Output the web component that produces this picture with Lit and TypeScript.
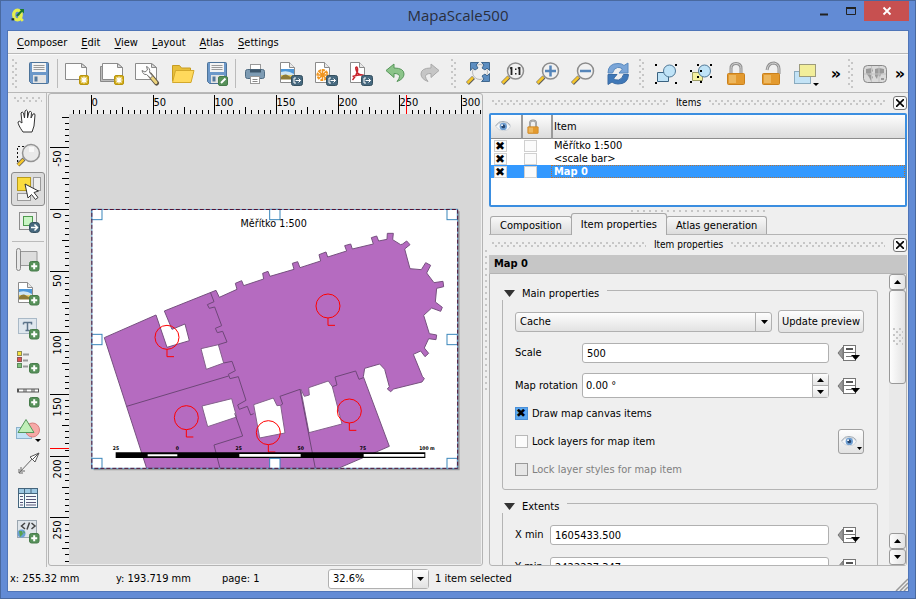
import { LitElement, html, svg, css } from "lit";
import { customElement, property } from "lit/decorators.js";
import { classMap } from "lit/directives/class-map.js";

/* ---------- shared icon fragments (26 x 26 grid) ---------- */
const plus = svg`<g transform="translate(14 14)"><rect x=".5" y=".5" width="9.5" height="9.5" rx="2" fill="#57915a" stroke="#467b4a"/><path d="M5.2 2.2v6M2.2 5.2h6" stroke="#fff" stroke-width="2"/></g>`;
const star = svg`<g transform="translate(15 14)"><rect x=".5" y=".5" width="9" height="9" rx="1.5" fill="#d3ad1a" stroke="#b8950e"/><path d="M5 1.5v7M1.5 5h7M2.5 2.5l5 5M7.500 2.500l-5 5" stroke="#fff" stroke-width="1.200"/></g>`;
const out = svg`<g transform="translate(14 14)"><rect x=".5" y=".5" width="11" height="10" rx="2" fill="#47697f" stroke="#35505f"/><path d="M5 3H3v5h2M4.500 5.500h5M7.500 3.500l2 2-2 2" fill="none" stroke="#fff"/></g>`;
const sheet = svg`<path d="M3.500 1.500h9l5 5v15h-14z" fill="#fff" stroke="#8b8b8b"/><path d="M12.500 1.500v5h5" fill="#e8e8e8" stroke="#8b8b8b"/>`;
const wideSheet = svg`<path d="M1.500 2.500h16l5 4v12h-21z" fill="#fdfdfd" stroke="#8b8b8b"/><path d="M17.500 2.500v4h5z" fill="#ddd" stroke="#8b8b8b"/>`;
const photo = svg`<rect x="4" y="8" width="13" height="10" fill="#4d97d8"/><path d="M4 13h13v5H4z" fill="#e9cf6d"/><path d="M4 11q7-2 13 2v1H4z" fill="#cfe6f5"/><path d="M4 16q4-4 7-1.500t6 1.500v2.500H4z" fill="#8d7a37"/>`;
const disk = svg`<path d="M3.500 2.500q0-1 1-1h17q1 0 1 1v19q0 1-1 1h-16l-2-2z" fill="#6c98c9" stroke="#4d7399"/><rect x="6" y="2" width="14" height="9" fill="#f4f4f4"/><path d="M7.500 4.500h11M7.500 6.500h11M7.500 8.500h11" stroke="#9a9a9a"/><rect x="7" y="14" width="13" height="8" fill="#e4e4e4"/><rect x="8.500" y="15.500" width="3" height="5" fill="#55799c"/>`;
const lens = svg`<path d="M9 16L2.500 22.500" stroke="#5b5b5b" stroke-width="4"/><path d="M8.500 16L2.500 22" stroke="#f5c62c" stroke-width="2.500"/><circle cx="15.500" cy="10" r="8" fill="#f1f1f1" stroke="#8c8c8c" stroke-width="1.500"/>`;
const shackle = svg`<path d="M8 13V7.500q0-5 5-5t5 5V13" fill="none" stroke="#8f8f8f" stroke-width="3"/><path d="M8 13V7.500q0-5 5-5t5 5V13" fill="none" stroke="#d5d5d5"/>`;
const lockBody = svg`<rect x="4.500" y="12.500" width="17" height="11" rx="1" fill="#e39a2f" stroke="#c9801c"/><path d="M6 14h7v8H6z" fill="#edb75e"/>`;
const drop = svg`<path d="M20 22h6l-3 3z" fill="#000"/>`;
const eye = svg`<path d="M1 12q4-6 12-6t12 6q-3 7-11 7-8 0-13-7z" fill="#f4f6f8" stroke="#b5bec7"/><path d="M1 11q5-8 12-7 8 0 12 6" fill="none" stroke="#9aa5b0" stroke-width="1.500"/><circle cx="13.500" cy="12" r="6" fill="#6f9fd2"/><circle cx="13.500" cy="12" r="3" fill="#27466f"/><circle cx="11.500" cy="10" r="1.500" fill="#fff"/>`;
const dots = (a: number, b: number, c: number, d: number) => svg`<path d="M${a} ${b}h2v2h-2zM${c} ${b}h2v2h-2zM${a} ${d}h2v2h-2zM${c} ${d}h2v2h-2z" fill="#000"/>`;

const icons: Record<string, unknown> = {
  save: disk,
  fresh: svg`${wideSheet}${star}`,
  duplicate: svg`<path d="M1.500 5.500h20v15h-20z" fill="#bbb" stroke="#888"/><path d="M3.500 2.500h15l5 4v12h-20z" fill="#fdfdfd" stroke="#8b8b8b"/><path d="M18.500 2.500v4h5z" fill="#ddd" stroke="#8b8b8b"/>${star}`,
  manager: svg`${wideSheet}<path d="M16 14l6.500 8" stroke="#5d5545" stroke-width="5" stroke-linecap="round"/><path d="M17.500 16l4.500 5.500" stroke="#ecd37c" stroke-width="3" stroke-linecap="round"/><path d="M12.500 5.500q4 1.500 3 6l3 3.500-2 2-4-3.500q-3.500.5-4.500-4l3 1.500 2.500-2z" fill="#fff" stroke="#777"/>`,
  open: svg`<path d="M3.500 20V4.500h7l2 2.500h9v3" fill="#e8bf3a" stroke="#c79c23"/><path d="M3.500 21.500l3-12h18.500l-3 12z" fill="#ffd95c" stroke="#d3a82b"/>`,
  saveAs: svg`${disk}<rect x="14.500" y="15.500" width="9" height="9" rx="1.500" fill="#57915a" stroke="#467b4a"/><path d="M17 22l4.500-4.500" stroke="#fff" stroke-width="2"/>`,
  print: svg`<rect x="8.500" y="3.500" width="10" height="7" fill="#fff" stroke="#999"/><rect x="3.500" y="8.500" width="19" height="9" rx="2" fill="#7d9bb3" stroke="#4f6c83"/><path d="M8 8.500h11v3H8z" fill="#3c566b"/><rect x="8.500" y="15.500" width="9" height="7" fill="#fff" stroke="#999"/><path d="M10.500 18.500h5M10.500 20.500h5" stroke="#888"/>`,
  exportImage: svg`${sheet}${photo}${out}`,
  exportSvg: svg`${sheet}<path d="M10.500 8v12M4.500 14h12M6.200 9.700l8.600 8.600M14.800 9.700l-8.600 8.600" stroke="#f0951e" stroke-width="1.500"/><circle cx="10.500" cy="14" r="5" fill="none" stroke="#f0951e" stroke-dasharray="2 1.900" stroke-width="2"/>${out}`,
  exportPdf: svg`${sheet}<path d="M9 6q2 0 1.500 4-1 5-5 9M9 6q-1 1 1.500 6 2 2.500 6 2-4-1-11 1.500" fill="none" stroke="#c8232b" stroke-width="1.500"/>${out}`,
  undo: svg`<path d="M4 9.500L12 3v4q10 0 10 6 0 5-7 7.500 2.500-3 2.500-5 0-3-5.500-3v4z" fill="#8cc48a" stroke="#56965a" stroke-linejoin="round"/>`,
  redo: svg`<path d="M22 9.500L14 3v4Q4 7 4 13q0 5 7 7.500-2.500-3-2.500-5 0-3 5.500-3v4z" fill="#c6c6c6" stroke="#a9a9a9" stroke-linejoin="round"/>`,
  zoomFull: svg`<path d="M8.500 16.500L2.500 22.500" stroke="#5b5b5b" stroke-width="4"/><path d="M8 16.500L2.500 22" stroke="#f5c62c" stroke-width="2.500"/><circle cx="15" cy="11" r="7.500" fill="#efefef" stroke="#bbb"/><path d="M5.500 1.500h8l-2.500 2.500 2 3-3 2-2.500-2-2 2.500zM24.500 1.500h-8l2.500 2.500-2 3 3 2 2-2 2.500 2.500zM24.500 20.500h-8l2.500-2.500-2-3 3-2 2 2 2.500-2.500z" fill="#5d8ec1" stroke="#40688f"/>`,
  zoomActual: svg`${lens}<path d="M11.500 6v8M19.500 6v8M10 7.500l1.500-1M18 7.500l1.500-1" stroke="#222" stroke-width="1.800"/><path d="M15 7.500h1.500v1.500H15zM15 12h1.500v1.500H15z" fill="#222"/>`,
  zoomIn: svg`${lens}<path d="M15.500 4.500v11M10 10h11" stroke="#5585b9" stroke-width="2.500"/>`,
  zoomOut: svg`${lens}<path d="M10 10h11" stroke="#5585b9" stroke-width="2.500"/>`,
  refresh: svg`<path d="M3 12Q3 2.500 13 2.500q4 0 6 2L23 2v10h-9l3.500-4Q15 6 12.500 6.500 9 7 7.500 12z" fill="#7ba6d8" stroke="#5a8abf"/><path d="M23.500 13.500Q23 23 13 23q-4 0-6-2l-4 2.500v-10h9L8.500 17.500q2 2 5 1.500 4-1 5-5.500z" fill="#3f78b8" stroke="#3a6ba3"/>`,
  selectAll: svg`<path d="M4.500 11.500h11v9h-11z" fill="#bfe3f7" stroke="#3a6280"/><circle cx="16.500" cy="10" r="6" fill="#bfe3f7" stroke="#4f7795"/>${dots(2, 3, 22, 21)}`,
  deselect: svg`<path d="M4.500 11.500h10v8h-10z" fill="#f5f1a0" stroke="#9a9a62"/><circle cx="16.500" cy="10" r="6" fill="#bfe3f7" stroke="#4f7795"/>${dots(9, 3, 22, 15)}${dots(2, 9, 12, 20)}`,
  lock: svg`${shackle}${lockBody}`,
  unlock: svg`<path d="M9 9q1-7 7-7 5 1 5 6v5" fill="none" stroke="#8f8f8f" stroke-width="3"/><path d="M9 9q1-7 7-7 5 1 5 6v5" fill="none" stroke="#d5d5d5"/>${lockBody}`,
  raise: svg`<rect x="1.500" y="10.500" width="16" height="12" fill="#c3e3f6" stroke="#8aabbf"/><rect x="6.500" y="3.500" width="16" height="12" fill="#f2ee9a" stroke="#9d9b7b"/>${drop}`,
  atlas: svg`<rect x="1.500" y="4.500" width="23" height="17" rx="4" fill="#dadada" stroke="#888"/><path d="M4 8l6-1 1 3-3 3 3 3-2 4-2-4-3-4zM13 8l4-1 5 1v4l-3 1-1 3-2-2-1 4-2-3 0-4zM19 17h3v2h-3z" fill="#9a9a9a"/><path d="M9.500 5v16M17 5v16M2 13h22" stroke="#c2c2c2"/>`,
  pan: svg`<path d="M8 24q-5-7-5-10 1-2 4 1L6 5q1-2 2.500 0l1 5L10 3q1.500-2 2.500 0v7l1.500-6q2-1.500 2.500.5L16 10l2-4q2-1 2 1l-1 11-2 6z" fill="#fff" stroke="#333" stroke-linejoin="round"/>`,
  zoom: svg`<path d="M2.500 20V4.500h12M2.500 14v5h6" fill="none" stroke="#111" stroke-dasharray="2 2"/><path d="M9 17l-6 6" stroke="#5b5b5b" stroke-width="4"/><path d="M8.500 17.500L3 23" stroke="#f5c62c" stroke-width="2.500"/><circle cx="16" cy="11" r="8.500" fill="#e9e9e9" stroke="#949494" stroke-width="1.500"/><path d="M14 5h5v5h-5zM16 12h6" fill="#f8f8f8"/>`,
  select: svg`<rect x="18.500" y="1.500" width="7" height="13" fill="#eee" stroke="#9a9a9a"/><rect x="2.500" y="17.500" width="13" height="7" fill="#eee" stroke="#9a9a9a"/><rect x="2.500" y="1.500" width="13" height="13" fill="#fbdc3f" stroke="#b89b1c"/><path d="M10 8l3 14 3.500-3.500 4 5 2.500-2-4-5 4.500-1.500z" fill="#fff" stroke="#333"/>`,
  moveContent: svg`<rect x="4.500" y="2.500" width="17" height="17" fill="#eee" stroke="#8d8d8d"/><rect x="8.500" y="6.500" width="9" height="9" fill="#c9f5c4" stroke="#4e9a4e"/><rect x="14.500" y="12.500" width="10" height="10" rx="3" fill="#47697f" stroke="#35505f"/><path d="M16 17.500h6M19.500 14.500l3 3-3 3" fill="none" stroke="#fff" stroke-width="1.500"/>`,
  addMap: svg`<path d="M5 4.500h17v14H6" fill="#ddd" stroke="#999"/><path d="M1.500 3.500q0-2 2-2t2 2v18q0 2-2 2t-2-2z" fill="#e8e8e8" stroke="#888"/>${plus}`,
  addImage: svg`${sheet}${photo}${plus}`,
  addLabel: svg`<rect x="3.500" y="3.500" width="18" height="15" fill="#dfe7ee" stroke="#a9b9c7"/><path d="M8.500 7.500h8v2M8.500 9.500v-2M12.500 7.500v8M10.500 15.500h4" fill="none" stroke="#5b738a" stroke-width="1.500"/>${plus}`,
  addLegend: svg`<path d="M8 5.500h6M8 11.500h5M8 17.500h5" stroke="#999" stroke-width="2"/><rect x="2.500" y="2.500" width="4" height="4" fill="#f6e23c" stroke="#8f8b55"/><rect x="2.500" y="8.500" width="4" height="4" fill="#e0504f" stroke="#8d5555"/><rect x="2.500" y="14.500" width="4" height="4" fill="#7fc17d" stroke="#5d8b5d"/>${plus}`,
  addScale: svg`<path d="M2 7.500h22" stroke="#555" stroke-width="4"/><path d="M4 7.500h4M12 7.500h4M20 7.500h3" stroke="#fff" stroke-width="2"/><path d="M8 7.500h4M16 7.500h4" stroke="#aaa" stroke-width="2"/>${plus}`,
  addShape: svg`<rect x="1.500" y="10.500" width="15" height="11" fill="#c3e3f6" stroke="#8bb2cc"/><circle cx="17.500" cy="13" r="7" fill="#f6a9a7" stroke="#d87c7c"/><path d="M11 2.500l8 13H3z" fill="#c0efb8" stroke="#55965a"/>${drop}`,
  addArrow: svg`<path d="M4 22L18 7M4 22v-4M4 22h4M6 20v-4M6 20h4" fill="none" stroke="#666"/><path d="M24 2l-4 9-5-5z" fill="#fff" stroke="#555"/><path d="M24 2l-7 7" stroke="#555"/>`,
  addTable: svg`<rect x="3.500" y="3.500" width="19" height="19" fill="#f4f9fc" stroke="#44657d"/><path d="M4 4h18v4H4z" fill="#9cc7e2"/><path d="M3.500 8.500h19M9.500 4v18M16 4v4" stroke="#44657d"/><path d="M5 11.500h3M5 14.500h3M5 17.500h3M5 20h3M11 11.500h10M11 14.500h10M11 17.500h10M11 20h10" stroke="#557"/>`,
  addHtml: svg`<rect x="2.500" y="1.500" width="19" height="17" fill="#dfe5ea" stroke="#9aa6b0"/><path d="M10 4L6.500 7l3.500 3M16.500 4L20 7l-3.500 3M14.500 3.500l-2.500 7" fill="none" stroke="#444" stroke-width="1.500"/><circle cx="6.500" cy="14.500" r="4" fill="#6aa0d8"/><path d="M4 12l3 0 1 3-3 3zM8 12l2 1-1 2z" fill="#5aa14f"/>${plus}`,
  eye,
  override: svg`<path d="M1 13l5-6v12z" fill="#999" stroke="#777"/><rect x="6.500" y="5.500" width="12" height="15" fill="#fff" stroke="#777"/><path d="M9 9h7" stroke="#555" stroke-width="2"/><path d="M7 12.500h11M9 16.500h6" stroke="#777"/><path d="M14 15h9l-4.500 5z" fill="#000"/>`,
  logo: svg`<ellipse cx="12" cy="13" rx="7" ry="9" fill="none" stroke="#e6ef4e" stroke-width="6"/><path d="M11 15L22 3" stroke="#1c7a2c" stroke-width="4"/><path d="M16 2h8v8z" fill="#1c7a2c"/><path d="M1 19h5v4H1z" fill="#23331c"/><path d="M14 15l8 9" stroke="#e6ef4e" stroke-width="5"/>`,
};

const icon = (name: string) => html`<svg viewBox="0 0 26 26" aria-hidden="true">${icons[name]}</svg>`;

const base = css`
  * { box-sizing: border-box; }
  button, input, select { font: inherit; color: inherit; margin: 0; }
  button { padding: 0; border: 0; background: none; display: flex; align-items: center; justify-content: center; }
  svg { display: block; }
  .dots {
    background-image:
      conic-gradient(at 2px 2px, transparent 270deg, #c6c6c6 0),
      conic-gradient(at 2px 2px, transparent 270deg, #c6c6c6 0);
    background-size: 6px 6px;
    background-position: 0 0, 3px 3px;
  }
`;

/* ---------- canvas with rulers ---------- */
const STEP = 37 / 6;
const ticks = (from: number, to: number) => Array.from({ length: to - from + 1 }, (_, i) => from + i);
const HANDLES = [[17, 13], [551, 13], [1083, 13], [17, 388], [1083, 388], [17, 760], [551, 760], [1083, 760]];
const MARKS = [[243, 397], [726, 303], [301, 638], [547, 683], [790, 618]];
const BAR: [number, string][] = [[90, "25"], [274, "0"], [458, "25"], [644, "50"], [831, "75"], [1023, "100 m"]];

@customElement("composer-canvas")
class ComposerCanvas extends LitElement {
  static styles = [base, css`
    :host { display: grid; grid-template: 19px minmax(0, 1fr) / 19px minmax(0, 1fr); min-width: 0; min-height: 0;
      border: 1px solid #b4b4b4; border-radius: 3px; padding: 1px; background: #efefef; margin-bottom: 1px; }
    svg { width: 100%; height: 100%; overflow: hidden; }
    .top { grid-column: 1 / 3; }
    .sheet { background: #d7d7d7; }
    text { font-family: "DejaVu Sans Condensed", "DejaVu Sans", sans-serif; font-size: 11px; }
    .tick { stroke: #000; }
    .cursor { stroke: #f00; }
    .room { fill: #b56bc0; stroke: #75507e; stroke-width: 3; }
    .hole { fill: #fff; stroke: #84608c; stroke-width: 3; }
    .wall { fill: none; stroke: #6d4677; stroke-width: 3; }
    .mark { fill: none; stroke: #f00; stroke-width: 3; }
    .handle { fill: #fff; stroke: #3a86bb; stroke-width: 3; }
    .small { font-size: 15px; font-weight: bold; text-anchor: middle; }
    .title { font-size: 32px; text-anchor: middle; }
  `];

  render() {
    return html`
      <svg class="top" role="img" aria-label="Horizontal ruler">
        ${ticks(-3, 63).map((n) => {
          const x = Math.round(41 + n * STEP) + 0.5;
          const y = n % 10 === 0 ? 0 : n % 5 === 0 ? 12 : 15;
          return svg`<path class="tick" d="M${x} ${y}V19"/>${n % 10 === 0 ? svg`<text x=${x} y="11">${n * 5}</text>` : ""}`;
        })}
        <path class="cursor" d="M356.500 0V19" />
      </svg>
      <svg role="img" aria-label="Vertical ruler">
        ${ticks(-15, 57).map((n) => {
          const y = Math.round(95 + n * STEP) + 0.5;
          const x = n % 10 === 0 ? 0 : n % 5 === 0 ? 12 : 15;
          return svg`<path class="tick" d="M${x} ${y}H19"/>${n % 10 === 0
            ? svg`<text transform="translate(11 ${y + 3}) rotate(-90)" text-anchor="end">${n * 5}</text>` : ""}`;
        })}
        <path class="cursor" d="M0 334.500H19" />
      </svg>
      <svg class="sheet" role="img" aria-label="Composition page">
        <g transform="translate(17 91) scale(.33333)">
          <path d="M23 19H1121V796H23z" fill="#9b9b9b" />
          <path d="M17 13H1115V790H17z" fill="#fff" />
          <path class="room" d="M55 398L210 330L243 427L310 407L297 357L258 373L235 318L390 256L400 277L453 253L448 235L467 227L473 242L533 222L530 205L546 199L552 214L624 193L619 175L635 170L642 188L704 168L699 149L720 141L725 156L782 138L776 122L794 117L799 132L862 117L856 98L872 93L878 108L903 103L904 85L922 85L920 104L944 119L950 117L962 108L972 119L956 132L972 191L1006 194L1019 173L1034 181L1022 204L1044 233L1071 229L1073 245L1052 250L1048 291L1069 307L1064 319L1037 309L1013 331L1030 386L1052 390L1050 404L1028 401L1015 429L1028 445L1017 455L1004 438L982 448L1009 514L1015 521L1008 531L923 552L914 560L904 552L910 545L896 493L881 477L836 490L832 515L910 724L757 790L182 790z" />
          <path class="hole" d="M345 431L397 419L413 474L361 493zM348 603L437 581L452 636L365 665zM503 599L562 579L573 602L584 601L597 684L521 699zM644 552L655 574L670 570L668 548L727 528L739 545L768 657L669 683z" />
          <path class="wall" d="M122 604L428 513M374 264L384 290L364 299L370 310L386 306L407 362L388 370L394 383L410 379L423 411L397 419M413 474L438 469L448 497L427 508L432 521L457 515L480 586L455 600L460 613L484 604L494 630L503 626M446 625L470 693L384 720L402 790M584 601L590 597L582 574L642 553L688 790M739 545L753 540L747 516L809 498L819 523L832 518" />
          ${MARKS.map(([x, y]) => svg`<circle class="mark" cx=${x} cy=${y} r="36"/><path class="mark" d="M${x} ${y + 36}v22h21"/>`)}
          <path d="M89 742H1018V759H89z" />
          <path d="M185 748H274V754H185zM460 747H644V755H460zM833 747H1015V755H833z" fill="#fff" />
          ${BAR.map(([x, label]) => svg`<text class="small" x=${x} y="735">${label}</text>`)}
          ${HANDLES.map(([x, y]) => svg`<rect class="handle" x=${x} y=${y} width="31" height="31"/>`)}
          <text class="title" x="563" y="66">Měřítko 1:500</text>
          <path d="M17.500 13.500H1115V790H17.500z" fill="none" stroke="#5fa3cf" stroke-width="3" />
          <path d="M17.500 13.500H1115V790H17.500z" fill="none" stroke="#54102f" stroke-width="3" stroke-dasharray="12 6" />
        </g>
      </svg>`;
  }
}

/* ---------- right hand panels ---------- */
@customElement("dock-title")
class DockTitle extends LitElement {
  @property() label = "";
  static styles = [base, css`
    :host { display: flex; align-items: center; gap: 8px; height: 20px; padding: 0 0 1px 3px; font-size: 10px; }
    .dots { flex: 1; height: 5px; }
    button { width: 14px; height: 14px; border: 1px solid #777; border-radius: 3px; background: #fafafa; }
    svg { width: 8px; height: 8px; }
  `];
  render() {
    return html`<span class="dots"></span><span>${this.label}</span><span class="dots"></span>
      <button aria-label="Close ${this.label}"><svg viewBox="0 0 8 8"><path d="M0 0l8 8M8 0L0 8" stroke="#000" stroke-width="1.600" /></svg></button>`;
  }
}

const ITEMS = [
  { name: "Měřítko 1:500", selected: false },
  { name: "<scale bar>", selected: false },
  { name: "Map 0", selected: true },
];

@customElement("items-panel")
class ItemsPanel extends LitElement {
  static styles = [base, css`
    :host { display: block; }
    .tree { height: 94px; border: 2px solid #3b8ee0; border-radius: 2px; background: #fff; }
    table { width: 100%; border-collapse: separate; border-spacing: 0; table-layout: fixed; }
    th { height: 24px; padding: 0 0 0 1px; text-align: left; font-weight: normal; border-bottom: 1px solid #8c8c8c;
      background: linear-gradient(#fdfdfd, #dcdcdc); }
    th:first-child { padding-left: 4px; }
    th + th { border-left: 2px solid #9a9a9a; }
    th svg { width: 16px; height: 16px; }
    th + th svg { margin-left: 1px; }
    .narrow { width: 30px; }
    td { height: 13px; padding: 0 0 0 3px; line-height: 13px; }
    .selected { background: #3399ff; color: #fff; font-weight: bold; }
    .selected td:last-child { outline: 1px dotted #b87333; outline-offset: -1px; }
    input { appearance: none; display: block; width: 13px; height: 12px; border: 1px solid #d0d0d0; background: #fbfbfb; color: #000; }
    input:checked::before { content: "✖"; display: block; font: 12px/10px "DejaVu Sans", sans-serif; }
  `];
  render() {
    return html`<div class="tree"><table>
      <colgroup><col class="narrow" /><col class="narrow" /><col /></colgroup>
      <thead><tr><th aria-label="Visible">${icon("eye")}</th><th aria-label="Locked">${icon("lock")}</th><th>Item</th></tr></thead>
      <tbody>${ITEMS.map((it) => html`<tr class=${classMap({ selected: it.selected })}>
        <td><input type="checkbox" checked aria-label="Show ${it.name}" /></td>
        <td><input type="checkbox" aria-label="Lock ${it.name}" /></td>
        <td>${it.name}</td></tr>`)}</tbody></table></div>`;
  }
}

const down = html`<svg class="arrow" viewBox="0 0 7 4"><path d="M0 0h7L3.500 4z" /></svg>`;
const up = html`<svg class="arrow" viewBox="0 0 7 4"><path d="M0 4h7L3.500 0z" /></svg>`;

@customElement("properties-panel")
class PropertiesPanel extends LitElement {
  static styles = [base, css`
    :host { display: flex; flex-direction: column; min-height: 0; flex: 1; }
    h2 { margin: 0; flex: none; height: 18px; padding: 0 5px; background: #c6c6c6; font-size: 11px; line-height: 18px; }
    .scroller { flex: 1; min-height: 0; display: flex; border: 1px solid #b4b4b4; border-radius: 0 0 3px 3px; margin-bottom: 1px; }
    .content { flex: 1; min-width: 0; overflow: hidden; padding: 7px 11px 0 12px; }
    fieldset { margin: 0 0 4px; padding: 10px 13px 12px 12px; border: 1px solid #b4b4b4; border-radius: 3px; min-width: 0; }
    .roomy { padding-top: 12px; }
    legend { display: flex; align-items: center; gap: 7px; margin-left: -13px; padding: 6px 8px 0 2px; line-height: 13px; background: #efefef; }
    .tri { width: 11px; height: 7px; }
    .arrow { width: 7px; height: 4px; }
    .row { display: flex; align-items: center; margin-bottom: 10px; }
    .field { flex: 1; min-width: 0; height: 20px; border: 1px solid #b0b0b0; border-radius: 3px; background: #fff; padding: 0 4px; outline: 0; }
    .spin { flex: 1; min-width: 0; height: 25px; display: flex; border: 1px solid #b0b0b0; border-radius: 3px; background: #fff; }
    .spin input { flex: 1; min-width: 0; border: 0; background: none; padding: 0 3px; }
    .steps { width: 16px; display: flex; flex-direction: column; border-left: 1px solid #b0b0b0; }
    .steps button { flex: 1; background: linear-gradient(#fdfdfd, #e4e4e4); }
    .steps button + button { border-top: 1px solid #b0b0b0; }
    .combo { flex: 1; min-width: 0; display: grid; align-items: center; height: 20px; }
    .combo > * { grid-area: 1 / 1; }
    .combo select { appearance: none; width: 100%; height: 20px; border: 1px solid #b0b0b0; border-radius: 3px; padding: 0 4px;
      background: linear-gradient(#fdfdfd, #e2e2e2); }
    .combo span { justify-self: end; width: 17px; height: 18px; border-left: 1px solid #b0b0b0; display: grid; place-items: center; pointer-events: none; }
    .push { height: 23px; padding: 0 3px; margin-left: 6px; border: 1px solid #b0b0b0; border-radius: 3px; background: linear-gradient(#fdfdfd, #e2e2e2); white-space: nowrap; }
    .name { width: 67px; white-space: nowrap; }
    .short { width: 35px; }
    .override { width: 26px; height: 20px; margin: 0 1px 0 8px; }
    .override svg { width: 26px; height: 26px; }
    .check { display: flex; align-items: center; gap: 4px; flex: 1; line-height: 13px; }
    .check input { appearance: none; width: 13px; height: 13px; border: 1px solid #b8b8b8; background: #fbfbfb; }
    .check input:checked { background: #5ba7f0; border-color: #4a90d9; }
    .check input:checked::before { content: "✖"; display: block; font: 12px/11px "DejaVu Sans", sans-serif; }
    .check input:disabled { background: #e6e6e6; border-color: #999; }
    .off { color: #808080; }
    .tall { min-height: 15px; }
    .tight { margin-bottom: 8px; }
    .loose { margin-bottom: 12px; }
    .last { margin-bottom: 0; }
    .theme { width: 26px; height: 25px; border: 1px solid #a0a0a0; border-radius: 3px; background: linear-gradient(#fdfdfd, #e2e2e2); }
    .theme svg { width: 16px; height: 16px; }
    .theme .arrow { width: 5px; height: 3px; align-self: flex-end; margin-bottom: 3px; }
    .bar { width: 17px; display: flex; flex-direction: column; background: #e9e9e9; }
    .bar button { height: 16px; flex: none; border: 1px solid #999; border-radius: 3px; background: linear-gradient(90deg, #fdfdfd, #e2e2e2); }
    .bar .thumb { height: 94px; }
    .thumb .dots { width: 10px; height: 18px; }
    .gap { flex: 1; }
  `];
  render() {
    const tri = html`<svg class="tri" viewBox="0 0 11 7"><path d="M0 0h11L5.500 7z" fill="#333" /></svg>`;
    const override = html`<button class="override" aria-label="Data defined override">${icon("override")}</button>`;
    return html`<h2>Map 0</h2>
      <div class="scroller">
        <div class="content">
          <fieldset>
            <legend>${tri}Main properties</legend>
            <div class="row">
              <span class="combo"><select aria-label="Preview mode"><option>Cache</option></select><span>${down}</span></span>
              <button class="push">Update preview</button>
            </div>
            <div class="row"><label class="name" for="scale">Scale</label><input class="field" id="scale" value="500" />${override}</div>
            <div class="row tight"><label class="name" for="rotation">Map rotation</label>
              <span class="spin"><input id="rotation" value="0.00 °" /><span class="steps"><button aria-label="Increase">${up}</button><button aria-label="Decrease">${down}</button></span></span>${override}</div>
            <div class="row tight tall"><label class="check"><input type="checkbox" checked />Draw map canvas items</label></div>
            <div class="row tight"><label class="check"><input type="checkbox" />Lock layers for map item</label>
              <button class="theme" aria-label="Set layers from theme">${icon("eye")}${down}</button></div>
            <div class="row last tall"><label class="check off"><input type="checkbox" disabled />Lock layer styles for map item</label></div>
          </fieldset>
          <fieldset class="roomy">
            <legend>${tri}Extents</legend>
            <div class="row loose"><label class="name short" for="xmin">X min</label><input class="field" id="xmin" value="1605433.500" />${override}</div>
            <div class="row"><label class="name short" for="ymin">Y min</label><input class="field" id="ymin" value="2422237.347" />${override}</div>
          </fieldset>
        </div>
        <div class="bar">
          <button aria-label="Scroll up">${up}</button>
          <button class="thumb" aria-label="Scroll thumb"><span class="dots"></span></button>
          <span class="gap"></span>
          <button aria-label="Scroll up">${up}</button>
          <button aria-label="Scroll down">${down}</button>
        </div>
      </div>`;
  }
}

/* ---------- application window ---------- */
const MENUS = ["Composer", "Edit", "View", "Layout", "Atlas", "Settings"];
const TOP = ["grip", "save", "|", "fresh", "duplicate", "manager", "open", "saveAs", "|", "print", "exportImage", "exportSvg", "exportPdf", "undo", "redo",
  "grip", "zoomFull", "zoomActual", "zoomIn", "zoomOut", "refresh", "grip", "selectAll", "deselect", "lock", "unlock", "raise", "more", "grip", "atlas", "more"];
const SIDE = ["pan", "zoom", "select", "moveContent", "|", "addMap", "addImage", "addLabel", "addLegend", "addScale", "addShape", "addArrow", "addTable", "addHtml"];

@customElement("app-root")
class AppRoot extends LitElement {
  static styles = [base, css`
    :host { display: block; font: 11px/14px "DejaVu Sans Condensed", "DejaVu Sans", sans-serif; color: #000; }
    .window { display: flex; flex-direction: column; height: 100vh; padding: 0 6px 6px; border: 1px solid #49699f; background: #628bd5; }
    header { display: grid; grid-template-columns: 1fr auto 1fr; height: 29px; flex: none; }
    h1 { margin: 0; font: 15px/29px "Open Sans", "Noto Sans", sans-serif; color: #2a2f3c; }
    .logo { width: 14px; height: 14px; margin: 7px 0 0 4px; }
    .controls { display: flex; justify-content: flex-end; align-items: flex-start; }
    .controls button { width: 27px; height: 20px; }
    .controls .close { width: 45px; background: #c75050; }
    .controls svg { width: 12px; height: 10px; }
    .client { flex: 1; min-height: 0; display: flex; flex-direction: column; border: 1px solid #4f75b8; background: #efefef; }
    nav { display: flex; gap: 4px; height: 23px; align-items: center; padding: 2px 4px 0; border-bottom: 1px solid #b8b8b8; }
    nav button { padding: 0 5px; height: 18px; }
    .key { text-decoration: underline; text-underline-offset: 2px; }
    .toolbar { display: flex; align-items: stretch; height: 39px; flex: none; border-bottom: 1px solid #b8b8b8; border-top: 1px solid #fafafa; }
    .toolbar button { flex: 0 0 35px; }
    .toolbar svg, .side svg { width: 26px; height: 26px; }
    .toolbar .more { flex: 0 0 16px; margin-left: 5px; font: bold 16px/20px "DejaVu Sans", sans-serif; }
    .toolbar .more:last-child { margin-left: 0; }
    .grip { flex: 0 0 5px; margin: 4px; }
    .sep { flex: 0 0 1px; margin: 4px 1px; background: #bbb; }
    .body { flex: 1; min-height: 0; display: grid; grid-template-columns: 40px minmax(0, 435fr) 6px minmax(0, 419fr); grid-template-rows: minmax(0, 1fr); }
    .side { display: flex; flex-direction: column; align-items: center; border-right: 1px solid #bbb; margin-right: 1px; padding-left: 2px; overflow: hidden; }
    .side .dots { flex: none; width: 28px; height: 5px; margin: 4px 0 2px; }
    .side button { flex: 0 0 34px; width: 34px; }
    .side .line { flex: none; width: 32px; height: 1px; margin: 1px 0; background: #bbb; }
    .side .active { border: 1px solid #8c8c8c; border-radius: 3px; background: #dcdcdc; }
    .splitter { width: 3px; height: 140px; margin: 157px auto 0; background-position: 0 0, 0 0; }
    .dock { display: flex; flex-direction: column; min-width: 0; margin-right: 1px; }
    .handle { flex: none; width: 134px; height: 2px; margin: 3px auto 1px; }
    .tabs { display: flex; align-items: flex-end; flex: none; height: 22px; border-bottom: 1px solid #b4b4b4; padding-left: 1px; }
    .tabs button { height: 18px; padding: 0 9px; border: 1px solid #a8a8a8; border-bottom: 0; border-radius: 3px 3px 0 0; background: linear-gradient(#f8f8f8, #dcdcdc); white-space: nowrap; }
    .tabs .current { height: 22px; background: #efefef; margin: 0 -1px -1px; }
    footer { display: flex; align-items: center; height: 24px; flex: none; padding-left: 2px; white-space: nowrap; }
    .cell { width: 106px; }
    .zoom { display: flex; width: 101px; height: 20px; border: 1px solid #b0b0b0; border-radius: 3px; background: #fff; margin-right: 6px; }
    .zoom input { flex: 1; min-width: 0; border: 0; background: none; padding: 0 4px; }
    .zoom button { width: 16px; border-left: 1px solid #b0b0b0; background: linear-gradient(#fdfdfd, #e2e2e2); }
    .arrow { width: 7px; height: 4px; }
    .size { width: 13px; height: 13px; margin-left: auto; align-self: flex-end; }
  `];

  private tool(name: string) {
    if (name === "grip") return html`<span class="grip dots"></span>`;
    if (name === "|") return html`<span class="sep"></span>`;
    if (name === "more") return html`<button class="more" aria-label="More">»</button>`;
    return html`<button aria-label=${name}>${icon(name)}</button>`;
  }

  render() {
    return html`<div class="window">
      <header>
        <svg class="logo" viewBox="0 0 26 26">${icons.logo}</svg>
        <h1>MapaScale500</h1>
        <div class="controls">
          <button aria-label="Minimize"><svg viewBox="0 0 12 10"><path d="M2 8.500h8" stroke="#222" stroke-width="2" /></svg></button>
          <button aria-label="Maximize"><svg viewBox="0 0 12 10"><path d="M1.500 2h9v6.500h-9z" fill="none" stroke="#222" /><path d="M1 2h10" stroke="#222" stroke-width="2" /></svg></button>
          <button class="close" aria-label="Close"><svg viewBox="0 0 12 10"><path d="M2.500 1.500l7 7M9.500 1.500l-7 7" stroke="#fff" stroke-width="1.800" /></svg></button>
        </div>
      </header>
      <div class="client">
        <nav>${MENUS.map((m) => html`<button><span><span class="key">${m[0]}</span>${m.slice(1)}</span></button>`)}</nav>
        <div class="toolbar">${TOP.map((t) => this.tool(t))}</div>
        <div class="body">
          <div class="side"><span class="dots"></span>${SIDE.map((t) => t === "|" ? html`<span class="line"></span>`
            : html`<button class=${classMap({ active: t === "select" })} aria-label=${t}>${icon(t)}</button>`)}</div>
          <composer-canvas></composer-canvas>
          <div class="splitter dots"></div>
          <div class="dock">
            <dock-title label="Items"></dock-title>
            <items-panel></items-panel>
            <span class="handle dots"></span>
            <div class="tabs"><button>Composition</button><button class="current">Item properties</button><button>Atlas generation</button></div>
            <dock-title label="Item properties"></dock-title>
            <properties-panel></properties-panel>
          </div>
        </div>
        <footer>
          <span class="cell">x: 255.32 mm</span><span class="cell">y: 193.719 mm</span><span class="cell">page: 1</span>
          <span class="zoom"><input aria-label="Zoom" value="32.6%" /><button aria-label="Zoom levels">${down}</button></span>
          <span>1 item selected</span>
          <svg class="size" viewBox="0 0 13 13"><path d="M1 13L13 1M5 13l8-8M9 13l4-4" stroke="#999" stroke-width="1.500" /></svg>
        </footer>
      </div>
    </div>`;
  }
}
